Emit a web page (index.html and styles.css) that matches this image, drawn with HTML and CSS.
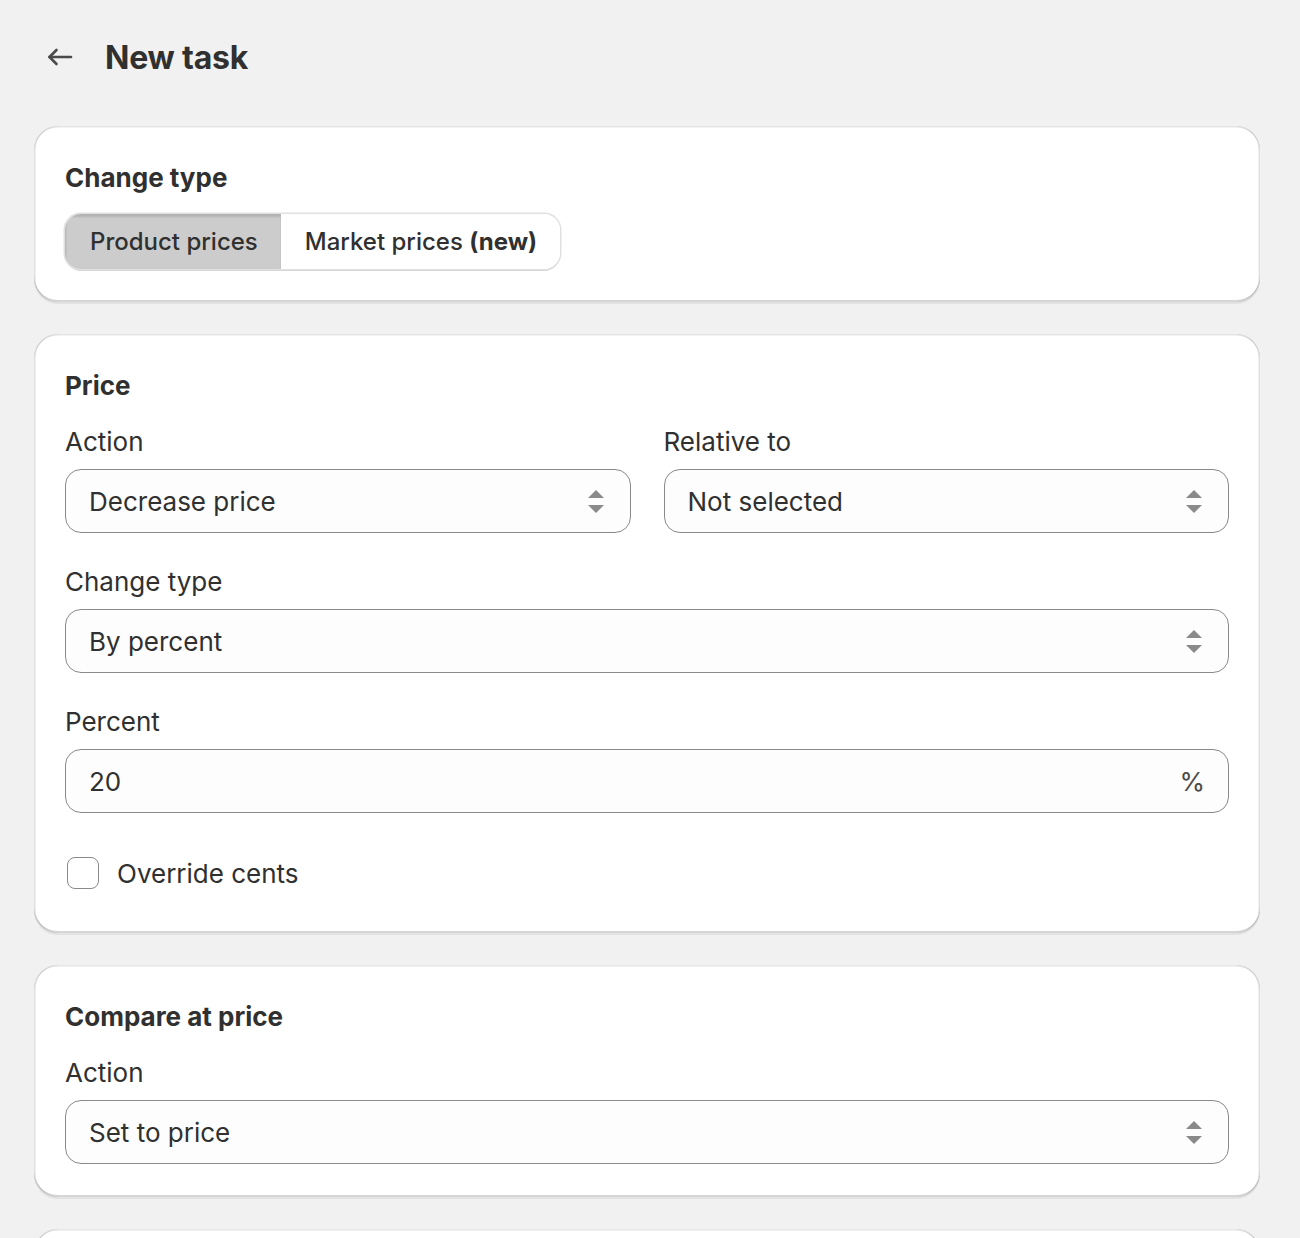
FILE: index.html
```html
<!DOCTYPE html>
<html lang="en">
<head>
<meta charset="utf-8">
<title>New task</title>
<link rel="stylesheet" href="styles.css">
</head>
<body>
<div class="page">
  <header class="page-header">
    <button class="back" aria-label="Back">
      <svg width="28" height="20" viewBox="0 0 28 20" fill="none" stroke="#4a4a4a" stroke-width="2.6" stroke-linecap="round" stroke-linejoin="round">
        <path d="M25 10H3.5"/>
        <path d="M10.5 3L3.5 10L10.5 17"/>
      </svg>
    </button>
    <h1 class="title">New task</h1>
  </header>

  <section class="card">
    <h2 class="card-heading">Change type</h2>
    <div class="segmented">
      <button class="seg seg-active">Product prices</button>
      <button class="seg seg-last">Market prices <b>(new)</b></button>
    </div>
  </section>

  <section class="card">
    <h2 class="card-heading">Price</h2>
    <div class="row">
      <div class="field">
        <label class="label">Action</label>
        <div class="select"><span>Decrease price</span><span class="arrows"></span></div>
      </div>
      <div class="field">
        <label class="label">Relative to</label>
        <div class="select"><span>Not selected</span><span class="arrows"></span></div>
      </div>
    </div>
    <div class="field gap-top">
      <label class="label">Change type</label>
      <div class="select"><span>By percent</span><span class="arrows"></span></div>
    </div>
    <div class="field gap-top">
      <label class="label">Percent</label>
      <div class="select"><span>20</span><span class="suffix">%</span></div>
    </div>
    <div class="check-row">
      <span class="checkbox"></span>
      <span class="check-label">Override cents</span>
    </div>
  </section>

  <section class="card">
    <h2 class="card-heading">Compare at price</h2>
    <div class="field">
      <label class="label">Action</label>
      <div class="select"><span>Set to price</span><span class="arrows"></span></div>
    </div>
  </section>

  <section class="card card-cut"></section>
</div>
</body>
</html>
```

FILE: styles.css
```css
* { box-sizing: border-box; }
html, body { margin: 0; padding: 0; }
body {
  background: #f1f1f1;
  font-family: Inter, "Noto Sans", sans-serif;
  color: #303030;
  overflow: hidden;
  height: 1238px;
}
.page {
  padding: 0 40px 0 34px;
  display: flex;
  flex-direction: column;
  gap: 32px;
}
.page-header {
  display: flex;
  align-items: center;
  height: 116px;
  margin-bottom: -21px;
  margin-top: -1px;
}
.back {
  border: 0;
  background: none;
  padding: 0;
  margin-left: 12px;
  width: 30px;
  height: 24px;
  display: flex;
  align-items: center;
  cursor: pointer;
}
.title {
  margin: 0 0 0 29px;
  font-size: 32px;
  font-weight: 700;
  letter-spacing: -0.2px;
  color: #303030;
}
.card {
  background: #fff;
  border-radius: 24px;
  padding: 32px 31px 33px 31px;
  box-shadow:
    inset 1.5px 0 0 rgba(0,0,0,0.12),
    inset -1.5px 0 0 rgba(0,0,0,0.12),
    inset 0 -2px 0 rgba(0,0,0,0.16),
    inset 0 1.5px 0 rgba(204,204,204,0.5),
    0 2px 0 rgba(26,26,26,0.07);
  display: flex;
  flex-direction: column;
}
.card-heading {
  margin: 0;
  font-size: 26px;
  line-height: 40px;
  font-weight: 650;
  color: #303030;
}
.segmented {
  margin-top: 16px;
  display: inline-flex;
  align-self: flex-start;
  border-radius: 16px;
  box-shadow: 0 0 0 1.5px #e0e0e0, 0 2px 0 #cfcfcf;
  overflow: hidden;
  height: 55px;
}
.seg {
  font-family: inherit;
  font-size: 24px;
  font-weight: 500;
  color: #303030;
  background: #fff;
  border: 0;
  padding: 0 24px;
  height: 55px;
  cursor: pointer;
}
.seg-last { padding-right: 23px; }
.seg b { font-weight: 700; }
.seg-active {
  background: #cccccc;
  box-shadow: inset 0 3px 2px rgba(0,0,0,0.12), inset 2px 0 1px rgba(0,0,0,0.05);
  padding: 0 23px 0 25px;
}
.row {
  display: grid;
  grid-template-columns: 1fr 1fr;
  column-gap: 33px;
  margin-top: 20px;
}
.card > .field:first-of-type { margin-top: 20px; }
.field { display: flex; flex-direction: column; }
.gap-top { margin-top: 33px; }
.label {
  font-size: 26px;
  line-height: 32px;
  color: #303030;
  margin-bottom: 11px;
}
.select {
  height: 64px;
  border: 1.3px solid #8a8a8a;
  border-radius: 16px;
  background: #fdfdfd;
  display: flex;
  align-items: center;
  justify-content: space-between;
  padding: 0 26px 0 23px;
  font-size: 26px;
  color: #303030;
}
.arrows {
  position: relative;
  width: 16px;
  height: 23px;
}
.arrows::before, .arrows::after {
  content: "";
  position: absolute;
  left: 0;
  width: 0;
  height: 0;
  border-left: 8px solid transparent;
  border-right: 8px solid transparent;
}
.arrows::before {
  top: 0;
  border-bottom: 8px solid #8a8a8a;
}
.arrows::after {
  bottom: 0;
  border-top: 8px solid #8a8a8a;
}
.suffix {
  color: #4a4a4a;
  font-size: 26px;
  margin-right: -3px;
}
.check-row {
  display: flex;
  align-items: center;
  height: 48px;
  margin-top: 36px;
  margin-bottom: 3px;
}
.checkbox {
  width: 32px;
  height: 32px;
  border: 1.3px solid #8a8a8a;
  border-radius: 8px;
  margin-left: 2px;
  background: #fff;
}
.check-label {
  margin-left: 18px;
  font-size: 26px;
  color: #303030;
}
.card-cut {
  height: 60px;
  flex-shrink: 0;
}
```
